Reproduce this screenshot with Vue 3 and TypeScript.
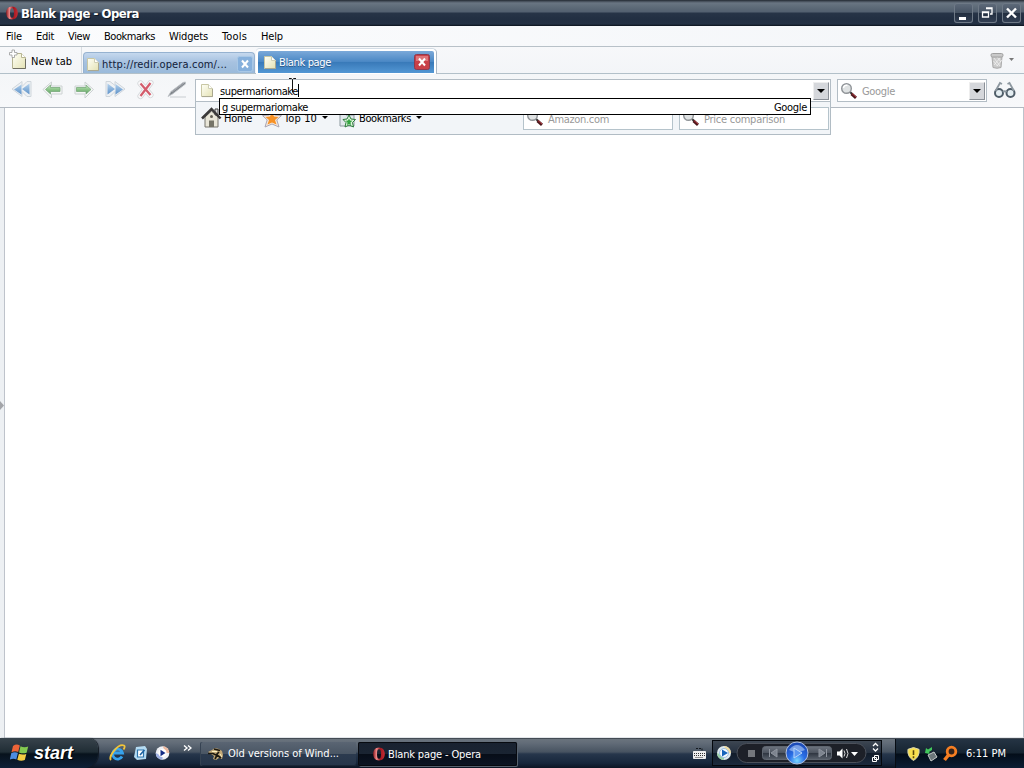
<script setup lang="ts">
import type { Directive } from 'vue'

interface MenuItem { label: string; gap: number; width: number }

const menus: MenuItem[] = [
  { label: 'File', gap: 6, width: 16 },
  { label: 'Edit', gap: 14, width: 18 },
  { label: 'View', gap: 14, width: 22 },
  { label: 'Bookmarks', gap: 14, width: 51 },
  { label: 'Widgets', gap: 14, width: 39 },
  { label: 'Tools', gap: 14, width: 25 },
  { label: 'Help', gap: 14, width: 22 },
]

// Spreads or tightens letters so that a label fills its width in pixels.
const vFit: Directive<HTMLElement, number> = {
  mounted(el, binding) {
    const natural = el.getBoundingClientRect().width
    const count = (el.textContent ?? '').trim().length
    el.style.letterSpacing = `${(binding.value - natural) / count}px`
  },
}
</script>

<template>
  <div class="screen">
    <svg class="defs" width="0" height="0">
      <defs>
        <linearGradient id="paper" x2="1" y2="1"><stop stop-color="#fffff6" /><stop offset="1" stop-color="#e4e2b4" /></linearGradient>
        <linearGradient id="blueA" x2="0" y2="1"><stop stop-color="#b4d2ee" /><stop offset="1" stop-color="#5f92c8" /></linearGradient>
        <linearGradient id="greenA" x2="0" y2="1"><stop stop-color="#c9e8c4" /><stop offset=".5" stop-color="#8cc588" /><stop offset="1" stop-color="#5f9d64" /></linearGradient>
        <linearGradient id="redO" x2="1"><stop stop-color="#8d1a20" /><stop offset=".3" stop-color="#f08a8a" /><stop offset=".6" stop-color="#a01820" /><stop offset="1" stop-color="#c42c34" /></linearGradient>
        <radialGradient id="orb" cx=".5" cy=".85" r=".8"><stop stop-color="#7ad6ff" /><stop offset=".45" stop-color="#2a6ee6" /><stop offset="1" stop-color="#1b48b4" /></radialGradient>
        <linearGradient id="pill" x2="0" y2="1"><stop stop-color="#6d747f" /><stop offset=".5" stop-color="#4c535e" /><stop offset=".52" stop-color="#2f3641" /><stop offset="1" stop-color="#59616c" /></linearGradient>
        <symbol id="page" viewBox="0 0 14 16">
          <path d="M1.500 2.500h7l4 4v8h-11z" fill="url(#paper)" stroke="#c9c7a4" />
          <path d="M8.500 2.500v4h4" fill="#fff" stroke="#cfceb4" />
          <path d="M2 14.600h10.500V7" fill="none" stroke="#9b9a86" stroke-width=".7" />
        </symbol>
        <symbol id="lens" viewBox="0 0 18 18">
          <path d="M10 10l2.500 2.300" stroke="#333" stroke-width="2" />
          <path d="M11.500 11.800l4.500 4" stroke="#4a1519" stroke-width="3" />
          <path d="M12 11.500l4 3.500" stroke="#b43b43" stroke-width="1" />
          <circle cx="6.500" cy="6.500" r="4.800" fill="#dfe2e3" stroke="#8f9397" stroke-width="1.400" />
          <path d="M3.500 6a3 3 0 0 1 4-2.600" fill="none" stroke="#fff" stroke-width="1.500" />
        </symbol>
        <symbol id="opera" viewBox="0 0 14 16">
          <path fill-rule="evenodd" d="M7 1.500c3.600 0 5.800 2.800 5.800 6.500S10.600 14.500 7 14.500 1.200 11.700 1.200 8 3.400 1.500 7 1.500zM7 3.200C5.500 3.200 5 5 5 8s.5 4.800 2 4.800S9 11 9 8 8.500 3.200 7 3.200z" fill="url(#redO)" />
        </symbol>
      </defs>
    </svg>

    <header class="title">
      <svg class="title-logo" width="14" height="16"><use href="#opera" /></svg>
      <span class="title-text" v-fit="118">Blank page - Opera</span>
      <div class="winbtns">
        <svg width="19" height="20"><path d="M5 15.500h7" stroke="#fff" stroke-width="3" /></svg>
        <svg width="19" height="20"><path d="M8 5h6v6h-2M4.500 9h6v5h-6zM4.500 9.500h6M8 5.500h6" stroke="#fff" stroke-width="1.300" fill="none" /></svg>
        <svg width="19" height="20"><path d="M5 5.500l9 9M14 5.500l-9 9" stroke="#fff" stroke-width="2.400" /></svg>
      </div>
    </header>

    <nav class="menu">
      <span v-for="m in menus" :key="m.label" class="menu-item" :style="{ marginLeft: m.gap + 'px', width: m.width + 'px' }"><span v-fit="m.width">{{ m.label }}</span></span>
    </nav>

    <div class="tabs">
      <div class="newtab">
        <svg width="20" height="22" viewBox="0 0 20 22">
          <path d="M3.500 4.500h9l4 4v11h-13z" fill="url(#paper)" stroke="#b5b391" />
          <path d="M12.500 4.500v4h4" fill="#fff" stroke="#b8b793" /><path d="M4 19.500h12.500V10" stroke="#6f6e62" fill="none" />
          <path d="M3 1h2.500v2.500H8V6H5.500v2.500H3V6H.5V3.500H3z" fill="#fff" stroke="#999" stroke-width=".8" />
        </svg>
        <span v-fit="41">New tab</span>
      </div>
      <div class="tab idle">
        <svg class="tab-page" width="14" height="16"><use href="#page" /></svg>
        <span v-fit="125">http://redir.opera.com/...</span>
        <svg class="x" width="16" height="16"><rect x=".5" y=".5" width="15" height="15" rx="2" fill="#86b0dc" stroke="#a9c8e6" /><path d="M5 4.500l6 7M11 4.500l-6 7" stroke="#fff" stroke-width="2" /></svg>
      </div>
      <div class="tab active">
        <svg class="tab-page" width="14" height="16"><use href="#page" /></svg>
        <span v-fit="52">Blank page</span>
        <svg class="x" width="16" height="16"><rect x=".5" y=".5" width="15" height="15" rx="2" fill="#c94048" stroke="#8f3a4f" /><path d="M2 2h12v5H2z" fill="#df7479" /><path d="M5 4.500l6 7M11 4.500l-6 7" stroke="#fff" stroke-width="2" /></svg>
      </div>
      <svg class="trash" width="28" height="18" viewBox="0 0 28 18">
        <path d="M2 4.500l1 11q4 1.500 8 0l1-11z" fill="#cbcbcb" stroke="#aaa" />
        <path d="M4 6l6 8M7 5l4 5M3.500 9l4 5M10 6l-6 7M12 8l-5 6" stroke="#f5f5f5" stroke-width=".7" />
        <rect x="1" y="1.500" width="12" height="3.500" rx="1.500" fill="#c9c9c9" stroke="#a0a0a0" />
        <path d="M19 6h5l-2.500 3z" fill="#777" />
      </svg>
    </div>

    <div class="toolbar">
      <div class="tools">
        <svg width="22" height="20" viewBox="0 0 22 20"><path d="M11 1.500v5l5-5h4v15h-4l-5-5v5L1 9z" fill="#eef1f4" stroke="#cfd6dc" /><path d="M10.500 4.500v10L3 9.500zM18.500 3.500v11l-7.500-5.500z" fill="url(#blueA)" /></svg>
        <svg width="22" height="20" viewBox="0 0 22 20"><path d="M1 9.500L9.500 2v4H20v8H9.500v4z" fill="#f5f6f7" stroke="#ccd2d2" /><path d="M3.500 9.500l5-4.500v2.500H18v4H8.500V14z" fill="url(#greenA)" stroke="#79a97c" stroke-width=".8" /></svg>
        <svg width="22" height="20" viewBox="0 0 22 20"><path d="M20.500 9.500L12 2v4H2v8h10v4z" fill="#f5f6f7" stroke="#ccd2d2" /><path d="M18 9.500L13 5v2.500H3.500v4H13V14z" fill="url(#greenA)" stroke="#79a97c" stroke-width=".8" /></svg>
        <svg width="22" height="20" viewBox="0 0 22 20"><path d="M11 1.500v4l-5-4H2v15h4l5-5v5L21 9z" fill="#eef1f4" stroke="#cfd6dc" /><path d="M3.500 3.500v11l7.500-5.500zM11.500 4v10.500L19 9.500z" fill="url(#blueA)" /></svg>
        <svg width="22" height="20" viewBox="0 0 22 20"><path d="M5.500 3.500l10 11.500M15.500 3l-10 13" stroke="#d3d6d9" stroke-width="6" stroke-linecap="round" /><path d="M5.500 3.500l10 11.500M15.500 3l-10 13" stroke="#f8f8f9" stroke-width="4.500" stroke-linecap="round" /><path d="M5.500 3.500l10 11.500M15.500 3l-10 13" stroke="#d35c6c" stroke-width="2.200" /></svg>
        <svg width="22" height="20" viewBox="0 0 22 20"><path d="M4 17h16" stroke="#dfe2e5" stroke-width="2" /><path d="M2 16.500l3-5L17 2.500l2.500-.5v2L6.500 14z" fill="#80858b" stroke="#c0c4c8" stroke-width=".9" /><path d="M6 12L18 3" stroke="#aeb3b9" stroke-width=".8" /></svg>
      </div>

      <div class="address-wrap">
        <div class="field address">
          <svg class="addr-page" width="14" height="16"><use href="#page" /></svg>
          <span v-fit="78">supermariomake</span><i class="caret"></i>
          <b class="drop"></b>
        </div>
        <div class="panel">
          <svg class="home" width="21" height="21" viewBox="0 0 21 21"><path d="M4 10l6.500-6 6.500 6v10H4z" fill="#e9e6d8" stroke="#77756c" /><path d="M14 2h3v6h-3z" fill="#ddd" stroke="#444" /><path d="M1 11.500L10.500 2l9 9.500" fill="none" stroke="#3b3939" stroke-width="2.500" /><path d="M8 13.500h5V20H8z" fill="#767467" /><circle cx="10.500" cy="9.500" r="1.500" fill="#636055" /></svg>
          <span class="l-home" v-fit="28">Home</span>
          <svg class="star" width="20" height="20" viewBox="0 0 20 20"><path d="M10 1l2.700 6 6.800.6-4.700 4.300L17 19l-7-3-7 3 2.200-7.100L.5 7.600 7.300 7z" fill="#f7e9dc" stroke="#a9a6b4" /><path d="M10 4l2 4.500 4.500.5-3.500 3 1.500 4.500-4.500-2-4.500 2L7 12 3.500 9 8 8.500z" fill="#f79226" /></svg>
          <span class="l-top" v-fit="33">Top 10</span><b class="tri"></b>
          <svg class="book" width="17" height="17" viewBox="0 0 17 17"><path d="M1 2h5l1 2h8v11H1z" fill="#e2e8ec" stroke="#8c989f" /><path d="M10 4l2 4 4.500.5-3 3 1 4.500-4.500-2-4 2 1-4.500-3-3L8 8z" fill="#e3f5df" stroke="#2b7d3b" /><path d="M10 7.500l1 2 2.500.3-2 1.700.6 2.500-2.100-1-2.100 1 .6-2.500-2-1.700L9 9.500z" fill="#33a441" /></svg>
          <span class="l-book" v-fit="52">Bookmarks</span><b class="tri"></b>
          <div class="mini first"><svg width="18" height="18"><use href="#lens" /></svg><span v-fit="61">Amazon.com</span></div>
          <div class="mini"><svg width="18" height="18"><use href="#lens" /></svg><span v-fit="81">Price comparison</span></div>
        </div>
        <div class="suggest"><span v-fit="86">g supermariomake</span><span v-fit="33">Google</span></div>
        <svg class="ibeam" width="9" height="17" viewBox="0 0 9 17"><path d="M1 .5h2.500l1 1 1-1H8M4.500 1.500v13" fill="none" stroke="#111" /></svg>
      </div>

      <div class="field search">
        <svg width="18" height="18"><use href="#lens" /></svg>
        <span v-fit="33">Google</span>
        <b class="drop"></b>
      </div>
      <svg class="glasses" width="24" height="20" viewBox="0 0 24 20"><g fill="#e5eef2" stroke="#4f5d68" stroke-width="2"><circle cx="6" cy="13" r="4" /><circle cx="17.500" cy="13" r="4" /></g><path d="M2.500 11L7 3l2 1M21 11l-4.500-8-2 1M10 12q1.700-1.500 3.500 0" fill="none" stroke="#8c979f" stroke-width="1.800" /></svg>
    </div>

    <main class="content">
      <div class="gutter"><svg width="4" height="9"><path d="M0 0l4 4.500L0 9z" fill="#a3a5a9" /></svg></div>
      <div class="page"></div>
    </main>

    <footer class="taskbar">
      <div class="start">
        <svg width="20" height="20" viewBox="0 0 20 20"><path d="M3 3q3.500-2.500 6.800-.5L8.200 9q-3-1.500-6.700.2z" fill="#ee6438" /><path d="M10.500 3.200q3.500 1.900 7.700.4l-1.600 6.200q-4 1.200-7.500-.4z" fill="#83c950" /><path d="M1.200 10.200q3.500-1.800 6.700-.2l-1.600 6.500q-3-1.500-6.500.2z" fill="#4d8de2" /><path d="M8.900 10.700q3.500 1.500 7.400.3l-1.500 6q-4 1.500-7.500-.3z" fill="#f5cd43" /></svg>
        <span v-fit="39">start</span>
      </div>
      <div class="quick">
        <svg width="17" height="18" viewBox="0 0 17 18"><path d="M13 12.500a5 5 0 1 1 .5-3.500H5" fill="none" stroke="#36a2ec" stroke-width="2.800" /><path d="M2 16C-1 13 9-1 15 1.500q1.500 1-.5 4" fill="none" stroke="#f1c43b" stroke-width="1.800" /></svg>
        <svg width="15" height="16" viewBox="0 0 15 16"><path d="M3 2l9-1 2 3-1 10-9 1-3-3z" fill="#b5dbf2" /><path d="M4.500 5h6v7h-6z" fill="#fff" stroke="#2c74ac" stroke-width="1.200" /><path d="M7 10l4.500-5" stroke="#1c62a1" stroke-width="1.600" /></svg>
        <svg width="15" height="16" viewBox="0 0 15 16"><circle cx="7.500" cy="8" r="6.800" fill="#eef0f5" /><path d="M7.500 1.200A6.800 6.800 0 0 1 14.300 8h-3z" fill="#edb9a0" /><path d="M.7 8a6.800 6.800 0 0 0 6.800 6.800V11z" fill="#9db0e4" /><circle cx="7.500" cy="8" r="4" fill="#fff" /><path d="M5.500 4.800l5 3.200-5 3.200z" fill="#142d85" /></svg>
        <svg class="more" width="9" height="7"><path d="M1 .5l3 2.500-3 2.500M5 .5L8 3 5 5.500" fill="none" stroke="#fff" stroke-width="1.400" /></svg>
      </div>
      <div class="task">
        <svg width="16" height="16" viewBox="0 0 16 16"><path d="M0 6l4-2 3-2 4 1 3 2 1 4-1 4-3-1-3 2-3-1 1-3-3-2z" fill="#c4aa78" /><path d="M0 7.500h5l3 1.500 3-3M6 3l6 1.500M7 13l2-4 4 3" stroke="#1c1810" stroke-width="1.700" fill="none" /><path d="M4 5.500h5M12 8l2 3" stroke="#fff2c1" /></svg>
        <span v-fit="111">Old versions of Wind...</span>
      </div>
      <div class="task pressed">
        <svg width="14" height="16"><use href="#opera" /></svg>
        <span v-fit="93">Blank page - Opera</span>
      </div>
      <svg class="keyboard" width="13" height="14" viewBox="0 0 13 14"><path d="M3 2.500h6v2" fill="none" stroke="#14191f" stroke-dasharray="2 1" /><path d="M.5 5.500h12v7H.5z" fill="#eee" stroke="#eee" /><path d="M1 7.500h11M1 9.500h11M2.500 11.500h8" stroke="#333" stroke-dasharray="1 1" /></svg>
      <div class="player">
        <svg width="169" height="25" viewBox="0 0 169 25">
          <circle cx="11" cy="12" r="7" fill="#dfe9ee" /><path d="M11 5a7 7 0 0 1 7 7h-4z" fill="#f0dba0" /><path d="M4 12a7 7 0 0 0 7 7v-4z" fill="#9ad0a8" /><circle cx="11" cy="12" r="4.500" fill="#f5faff" stroke="#9cc0e2" /><path d="M9 8.500l6 3.500-6 3.500z" fill="#1664bb" />
          <rect x="24" y="2.500" width="129" height="19" rx="9.500" fill="#1d2028" stroke="#4b505a" />
          <path d="M35 9h7v7h-7z" fill="#74777c" />
          <rect x="49.500" y="5.500" width="69" height="13" rx="3" fill="url(#pill)" stroke="#5f6670" />
          <path d="M56.500 8v8M64 8v8l-6-4zM106 8v8l6-4zM113.500 8v8" fill="#7d848f" stroke="#9096a0" />
          <circle cx="84" cy="12" r="11" fill="url(#orb)" stroke="#b2c1df" /><path d="M76 9q8-10 16 0-8 4-16 0z" fill="#a9c6f5" opacity=".65" /><path d="M81 7l8 5-8 5z" fill="#5d97f0" stroke="#b6d4fa" />
          <path d="M124 10.500h2.500l3-3v10l-3-3H124z" fill="#fff" /><path d="M131 9.500q2 3 0 6M133.500 8q3 4.500 0 9" fill="none" stroke="#ddd" /><path d="M138 11h7l-3.500 4z" fill="#fff" />
          <path d="M160 5l2.500-2.500L165 5M160 7.500l2.500 2.500L165 7.500" fill="none" stroke="#fff" stroke-width="1.300" /><path d="M161.500 14.500h4v4h-4zM159.500 16.500h4v4h-4z" fill="#1b222d" stroke="#fff" />
        </svg>
      </div>
      <div class="tray">
        <svg width="13" height="16" viewBox="0 0 14 16"><path d="M7 1l6 2q1 8-6 12Q0 11 1 3z" fill="#f8e04e" stroke="#dcd9b6" /><path d="M7 4v5M7 10.500v2" stroke="#59470a" stroke-width="1.700" /></svg>
        <svg width="14" height="16" viewBox="0 0 14 16"><path d="M4 9l6-3 3 5-6 4z" fill="#6d777b" stroke="#c5caca" /><path d="M1 7l1-5 2 1.500L8 1v3L5 6l1 2z" fill="#42c75c" /></svg>
        <svg width="16" height="17" viewBox="0 0 16 17"><circle cx="9.500" cy="6.500" r="4.300" fill="#34231b" stroke="#f57e22" stroke-width="2.800" /><path d="M6.500 10l-4 5" stroke="#f57e22" stroke-width="3.500" /></svg>
        <span v-fit="40">6:11 PM</span>
      </div>
    </footer>
  </div>
</template>

<style>
body { overflow: hidden; }
</style>

<style scoped>
* { box-sizing: border-box; }
svg { display: block; flex: none; }
.screen { width: 1024px; height: 768px; display: flex; flex-direction: column; position: relative; overflow: hidden; background: #fff; color: #000; font: 11px/14px "DejaVu Sans Condensed", "DejaVu Sans", sans-serif; font-stretch: condensed; white-space: nowrap; }
.defs { position: absolute; }
span { flex: none; }
.title { height: 26px; flex: none; display: flex; align-items: center; padding: 0 3px 0 5px; color: #fff; background: linear-gradient(#20262e 0, #3e4752 1px, #697582 3px, #596674 9px, #536070 12px, #273447 13px, #222f42 19px, #243144 24px, #0b121c 26px); }
.title-text { margin: 1px 0 0 2px; font-size: 13px; font-weight: bold; text-shadow: 1px 1px #101925; }
.winbtns { margin-left: auto; display: flex; gap: 5px; margin-top: -1px; }
.winbtns svg { border-radius: 3px; background: linear-gradient(#606c7b, #465363 48%, #222e3f 50%, #344155); box-shadow: inset 0 0 0 1px #6e7986; }
.menu { height: 21px; flex: none; display: flex; align-items: center; padding-top: 2px; background: linear-gradient(90deg, #fbfcfd, #f4f6f9); border-bottom: 1px solid #b8c1c8; }
.menu-item { display: flex; }
.tabs { height: 27px; flex: none; display: flex; align-items: flex-start; background: linear-gradient(#f7f8fa, #f3f5f8); border-bottom: 1px solid #b2c0c9; }
.newtab { width: 82px; height: 26px; display: flex; align-items: center; padding: 0 0 1px 9px; border-right: 1px solid #d8dde2; }
.newtab span { margin-left: 2px; margin-top: 4px; }
.tab { height: 21px; display: flex; align-items: center; border-radius: 4px 4px 0 0; }
.tab .x { margin-left: auto; }
.idle { width: 172px; margin: 5px 0 0 1px; padding: 2px 1px 0 2px; background: linear-gradient(#c5d8ee, #a7c2e0 45%, #9abada); border: 1px solid #96b2d0; border-bottom: 0; }
.idle span { margin: 2px 0 0 2px; color: #112039; }
.active { width: 180px; height: 25px; margin: 2px 0 0 1px; padding: 0 4px 0 5px; background: linear-gradient(#7ba9d9, #4b88c5 48%, #397ab9 52%, #5397d4); border: 2px solid #fff; border-bottom-width: 1px; box-shadow: 1px 0 #a9b7c5, 0 -1px #d4dde6; }
.active span { margin: 1px 0 0 2px; color: #fff; text-shadow: 0 1px #315b88; }
.trash { margin: 5px 6px 0 auto; }
.toolbar { height: 34px; flex: none; display: flex; align-items: flex-start; background: linear-gradient(#f4f6f8, #f7f8fa); border-bottom: 1px solid #b2b9c1; }
.tools { width: 195px; display: flex; gap: 9px; padding: 6px 0 0 11px; }
.address-wrap { width: 636px; position: relative; margin-top: 5px; }
.field { height: 23px; display: flex; align-items: center; border: 1px solid #b3bdc5; background: #fff; }
.address { padding-left: 4px; }
.address span { margin: 2px 0 0 6px; }
.addr-page { margin-top: -1px; }
.caret { width: 1px; height: 13px; background: #000; }
.drop { width: 16px; height: 18px; margin: 0 1px 0 auto; display: flex; align-items: center; justify-content: center; background: #d5d7db; border: 1px solid #999da3; border-color: #eee #8b9097 #8b9097 #eee; }
.drop::before, .tri { content: ""; border: solid transparent; border-width: 4px 4px 0; border-top-color: #000; }
.panel { position: absolute; z-index: 1; top: 23px; left: 0; width: 636px; height: 33px; display: flex; align-items: center; padding-left: 5px; border: 1px solid #b1bcc4; border-top: 0; background: #f2f5f8; }
.home { margin-top: -2px; }
.l-home { margin: 1px 0 0 2px; }
.star { margin-left: 10px; }
.l-top { margin: 1px 0 0 2px; }
.tri { border-width: 3px 3px 0; margin: -2px 0 0 5px; }
.book { margin: 2px 0 0 11px; }
.l-book { margin: 1px 0 0 3px; }
.mini { width: 150px; height: 23px; margin: 0 0 0 6px; padding-left: 2px; display: flex; align-items: center; border: 1px solid #b5c3cb; background: #fff; color: #999; }
.mini.first { margin-left: auto; }
.mini:last-child { margin-right: 1px; }
.mini span { margin: 3px 0 0 4px; }
.suggest { position: absolute; z-index: 2; left: 24px; top: 19px; width: 592px; height: 17px; display: flex; align-items: center; justify-content: space-between; padding: 2px 3px 0 2px; border: 1px solid #000; background: #fff; }
.ibeam { position: absolute; z-index: 3; left: 93px; top: -1px; }
.search { width: 150px; margin: 5px 0 0 6px; padding-left: 2px; color: #999; }
.search span { margin: 2px 0 0 4px; }
.glasses { margin: 6px 0 0 6px; }
.content { flex: 1; display: flex; min-height: 0; }
.gutter { width: 5px; display: flex; align-items: center; background: #edf0f3; border-right: 1px solid #bec3cb; padding-bottom: 36px; }
.page { flex: 1; border-right: 1px solid #bcc3cb; border-bottom: 1px solid #e3e6ea; background: #fff; }
.taskbar { height: 30px; flex: none; display: flex; align-items: center; color: #fff; background: linear-gradient(#1c222b 0, #6b747e 1px, #626c78 5px, #475361 14px, #26364b 16px, #17273c 25px, #0c1524 30px); }
.start { width: 98px; height: 30px; display: flex; align-items: center; padding-left: 10px; border-radius: 0 10px 14px 0; background: linear-gradient(#38434c, #202d35 14px, #07121c 16px, #0e2037); box-shadow: 1px 0 1px #111821; }
.start span { margin-left: 4px; font: italic bold 18px/20px "Liberation Sans", sans-serif; text-shadow: 1px 1px #000; }
.quick { width: 102px; display: flex; align-items: center; gap: 7px; padding-left: 11px; }
.quick .more { margin: -10px 0 0 6px; }
.task { width: 156px; height: 24px; margin-top: 2px; padding-left: 8px; display: flex; align-items: center; border-radius: 2px; background: linear-gradient(#5a6573, #4a5664 48%, #2b3a4e 52%, #26354a); box-shadow: inset 1px 0 #354252, inset 0 -1px #1a2636; }
.task span { margin-left: 4px; }
.pressed { width: 159px; margin-left: 2px; padding-left: 14px; background: linear-gradient(#192230, #1a2432 48%, #070d18 52%, #0c1524); box-shadow: inset 0 0 0 1px #070a10, 1px 1px #56616e; }
.pressed span { margin: 2px 0 0 2px; }
.keyboard { margin: -1px 6px 0 auto; }
.player { width: 170px; height: 26px; margin: 0 13px 0 0; border: 1px solid #05080d; background: linear-gradient(#3d4652, #263140 48%, #121c2a 52%, #1c2a3d); }
.tray { width: 129px; height: 29px; align-self: flex-end; display: flex; align-items: center; gap: 4px; padding-left: 11px; background: linear-gradient(#253444, #162431 48%, #030d19 52%, #0c1d33); border-left: 1px solid #070c13; }
.tray span { margin-left: 4px; }
</style>
